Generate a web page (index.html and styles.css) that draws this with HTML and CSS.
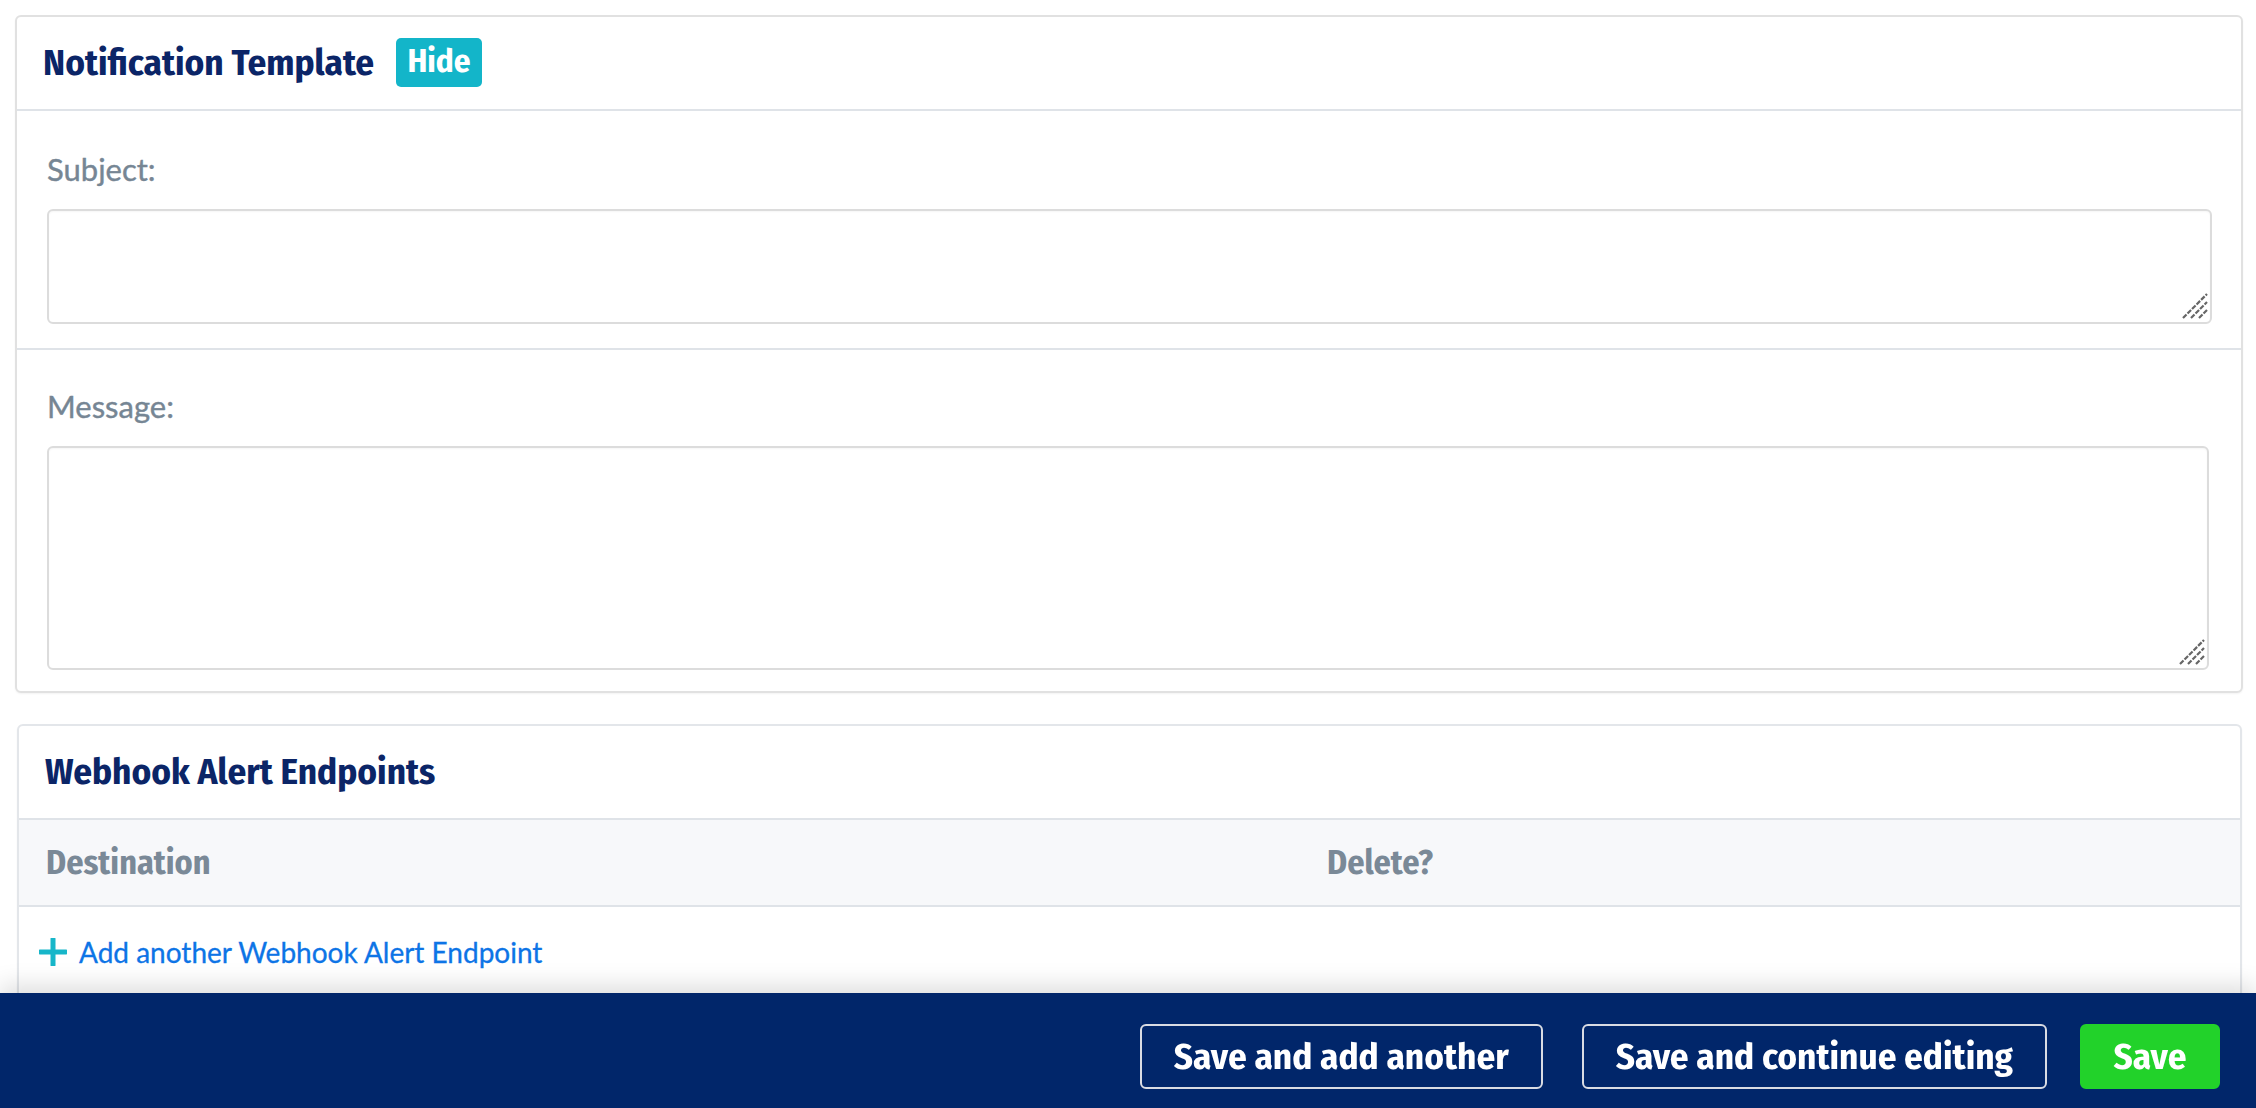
FILE: index.html
```html
<!DOCTYPE html>
<html lang="en">
<head>
<meta charset="utf-8">
<title>Notification Template</title>
<link rel="stylesheet" href="styles.css">
</head>
<body>
<div class="page">
  <section class="card card-template">
    <header class="card-head">
      <h2 class="card-title">Notification Template</h2>
      <span class="badge">Hide</span>
    </header>
    <div class="field field-subject">
      <label class="field-label" for="subject">Subject:</label>
      <div class="input-wrap">
        <textarea id="subject" class="field-input input-subject"></textarea>
        <svg class="grip" viewBox="0 0 26 26" width="26" height="26" aria-hidden="true">
          <path d="M1 25L25 1M9 25L25 9M17 25L25 17" stroke="#666" stroke-width="2.2" stroke-dasharray="5 1.4" fill="none"/>
        </svg>
      </div>
    </div>
    <div class="field field-message">
      <label class="field-label" for="message">Message:</label>
      <div class="input-wrap wrap-message">
        <textarea id="message" class="field-input input-message"></textarea>
        <svg class="grip" viewBox="0 0 26 26" width="26" height="26" aria-hidden="true">
          <path d="M1 25L25 1M9 25L25 9M17 25L25 17" stroke="#666" stroke-width="2.2" stroke-dasharray="5 1.4" fill="none"/>
        </svg>
      </div>
    </div>
  </section>

  <section class="card card-webhooks">
    <header class="card-head">
      <h2 class="card-title">Webhook Alert Endpoints</h2>
    </header>
    <div class="table-head">
      <div class="th th-dest">Destination</div>
      <div class="th th-del">Delete?</div>
    </div>
    <div class="add-row">
      <a class="add-link" href="#">
        <svg class="add-icon" viewBox="0 0 28 28" width="28" height="28" aria-hidden="true">
          <path d="M14 1v26M1 14h26" stroke="#17b6c9" stroke-width="5" stroke-linecap="round" fill="none"/>
        </svg>
        <span>Add another Webhook Alert Endpoint</span>
      </a>
    </div>
  </section>
</div>

<footer class="submit-bar">
  <button class="btn btn-outline btn-first" type="button">Save and add another</button>
  <button class="btn btn-outline" type="button">Save and continue editing</button>
  <button class="btn btn-save" type="button">Save</button>
</footer>
</body>
</html>
```

FILE: styles.css
```css
* { box-sizing: border-box; }

html, body {
  margin: 0;
  padding: 0;
  background: #ffffff;
}

body {
  font-family: "Lato", "Open Sans", sans-serif;
  color: #0b2567;
}

.page {
  padding: 15px 13px 0 15px;
  display: flex;
  flex-direction: column;
  gap: 31px;
}

.card {
  border: 2px solid #e1e1e1;
  border-radius: 6px;
  background: #fff;
  box-shadow: 0 1px 2px rgba(0, 0, 0, 0.05);
}

.card-webhooks {
  margin: 0 1px 0 2px;
  border-color: #e3e6ea;
}

.card-head {
  height: 94px;
  display: flex;
  align-items: center;
  gap: 22px;
  padding: 0 26px 2px;
  border-bottom: 2px solid #dfe3e8;
}

.card-title, .th, .btn, .badge {
  font-family: "Fira Sans Condensed", "Open Sans", sans-serif;
  font-stretch: 75%;
  font-weight: 700;
}

.card-title {
  margin: 0;
  font-size: 37px;
  color: #0b2567;
}

.badge {
  display: inline-flex;
  align-items: center;
  justify-content: center;
  width: 86px;
  height: 49px;
  border-radius: 5px;
  background: #13b5c9;
  color: #fff;
  font-size: 33px;
  padding-bottom: 2px;
}

.field {
  display: flex;
  flex-direction: column;
  padding: 40px 29px 24px 30px;
}

.field-subject {
  border-bottom: 2px solid #dfe3e8;
}

.field-message {
  padding-top: 38px;
  padding-bottom: 21px;
}

.field-label {
  font-family: "Lato", sans-serif;
  font-size: 31px;
  line-height: 37px;
  color: #768694;
  margin-bottom: 21px;
  -webkit-text-stroke: 0.4px #768694;
}

.input-wrap {
  position: relative;
}

.wrap-message {
  margin-right: 3px;
}

.field-input {
  display: block;
  width: 100%;
  border: 2px solid #dcdcdc;
  border-radius: 6px;
  background: #fff;
  box-shadow: inset 0 1px 2px rgba(0, 0, 0, 0.04);
  resize: none;
  font: inherit;
}

.grip {
  position: absolute;
  right: 4px;
  bottom: 5px;
  pointer-events: none;
}

.input-subject { height: 115px; }
.input-message { height: 224px; }

.table-head {
  display: grid;
  grid-template-columns: 1283px 1fr;
  height: 87px;
  align-items: center;
  background: #f7f8fa;
  border-bottom: 2px solid #dfe3e8;
}

.th {
  font-size: 34px;
  color: #7a8997;
  padding-left: 27px;
}

.th-del { padding-left: 25px; }

.add-row {
  height: 92px;
  padding: 28px 0 0 20px;
}

.add-link {
  display: inline-flex;
  align-items: center;
  gap: 12px;
  color: #0d74e6;
  text-decoration: none;
  font-family: "Lato", sans-serif;
  font-size: 28px;
  -webkit-text-stroke: 0.3px #0d74e6;
}

.add-icon { flex: none; }

.submit-bar {
  position: fixed;
  left: 0;
  right: 0;
  bottom: 0;
  height: 115px;
  background: #01266a;
  box-shadow: 0 -8px 22px rgba(0, 0, 0, 0.13);
  display: flex;
  justify-content: flex-end;
  align-items: flex-start;
  gap: 33px;
  padding: 31px 36px 0 0;
}

.btn {
  height: 65px;
  border-radius: 6px;
  font-size: 37px;
  color: #fff;
  cursor: pointer;
  padding: 0 32px;
}

.btn-outline {
  background: transparent;
  border: 2px solid #d9dce3;
}

.btn-first { margin-right: 6px; }

.btn-save {
  background: #22d22a;
  border: 2px solid #22d22a;
  width: 140px;
  padding: 0;
}
```
